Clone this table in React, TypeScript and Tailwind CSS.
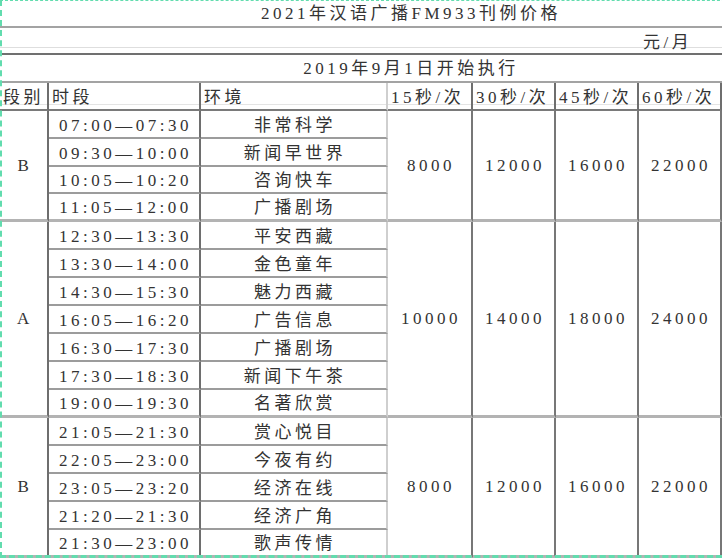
import React from 'react';

type Row = [string, string];

const groups: { band: string; prices: string[]; rows: Row[] }[] = [
  {
    band: 'B',
    prices: ['8000', '12000', '16000', '22000'],
    rows: [
      ['07:00—07:30', '非常科学'],
      ['09:30—10:00', '新闻早世界'],
      ['10:05—10:20', '咨询快车'],
      ['11:05—12:00', '广播剧场'],
    ],
  },
  {
    band: 'A',
    prices: ['10000', '14000', '18000', '24000'],
    rows: [
      ['12:30—13:30', '平安西藏'],
      ['13:30—14:00', '金色童年'],
      ['14:30—15:30', '魅力西藏'],
      ['16:05—16:20', '广告信息'],
      ['16:30—17:30', '广播剧场'],
      ['17:30—18:30', '新闻下午茶'],
      ['19:00—19:30', '名著欣赏'],
    ],
  },
  {
    band: 'B',
    prices: ['8000', '12000', '16000', '22000'],
    rows: [
      ['21:05—21:30', '赏心悦目'],
      ['22:05—23:00', '今夜有约'],
      ['23:05—23:20', '经济在线'],
      ['21:20—21:30', '经济广角'],
      ['21:30—23:00', '歌声传情'],
    ],
  },
];

const spans: Record<number, string> = {
  4: 'row-span-4',
  5: 'row-span-5',
  7: 'row-span-7',
};

export default function App() {
  return (
    <div className="relative w-[722px] h-[559px] overflow-hidden bg-white">
      <div className="grid w-[818px] grid-cols-[49px_152px_187px_85px_83px_83px_83px_96px] grid-rows-[28px_27px_28px_28px_28px_28px_27px_28px_repeat(12,28px)] font-['Liberation_Serif','Noto_Sans_CJK_SC',serif] text-[17px] tracking-[3.5px] text-[#333] leading-none">
        {/* title rows */}
        <div className="col-span-8 flex items-center justify-center border-b-2 border-[#a3a3a3] pl-1">
          2021年汉语广播FM933刊例价格
        </div>
        <div className="col-span-6 border-b-2 border-[#707070] bg-[linear-gradient(to_bottom,transparent_19px,#dedede_19px,#dedede_20px,transparent_20px)]" />
        <div className="flex items-center border-b-2 border-[#707070] bg-[linear-gradient(to_bottom,transparent_19px,#dedede_19px,#dedede_20px,transparent_20px)] pl-1 pt-1">
          元/月
        </div>
        <div className="border-b-2 border-[#707070] bg-[linear-gradient(to_bottom,transparent_19px,#dedede_19px,#dedede_20px,transparent_20px)]" />
        <div className="col-span-8 flex items-center justify-center border-b-2 border-[#a3a3a3] pl-1">
          2019年9月1日开始执行
        </div>

        {/* header */}
        {['段别', '时段', '环境', '15秒/次', '30秒/次', '45秒/次', '60秒/次', ''].map((h, i) => (
          <div
            key={i}
            className={`flex items-center overflow-hidden whitespace-nowrap border-b-2 border-b-[#7a7a7a] pl-[3px] pt-[2px] ${
              i === 7 ? '' : i === 2 ? 'border-r-2 border-r-[#cfcfcf]' : 'border-r-2 border-r-[#6e6e6e]'
            } bg-[linear-gradient(to_bottom,transparent_21px,#e4e4e4_21px,#e4e4e4_22px,transparent_22px)]`}
          >
            {h}
          </div>
        ))}

        {/* data */}
        {groups.map((g, gi) =>
          g.rows.map((r, ri) => {
            const last = ri === g.rows.length - 1;
            const rowBorder = last ? 'border-b-[3px] border-b-[#b3b3b3]' : 'border-b-2 border-b-[#9c9c9c]';
            const span = spans[g.rows.length];
            return (
              <React.Fragment key={`${gi}-${ri}`}>
                {ri === 0 && (
                  <div className={`${span} flex items-center justify-center border-r-2 border-r-[#6e6e6e] border-b-[3px] border-b-[#b3b3b3] pl-[3px]`}>
                    {g.band}
                  </div>
                )}
                <div className={`flex items-center justify-center whitespace-nowrap border-r-2 border-r-[#6e6e6e] pl-[3px] pt-[2px] ${rowBorder}`}>
                  {r[0]}
                </div>
                <div className={`flex items-center justify-center whitespace-nowrap border-r-2 border-r-[#cfcfcf] pl-[3px] pt-[2px] ${rowBorder}`}>
                  {r[1]}
                </div>
                {ri === 0 &&
                  g.prices.map((p, pi) => (
                    <div
                      key={pi}
                      className={`${span} flex items-center justify-center border-r-2 border-r-[#777] border-b-[3px] border-b-[#b3b3b3] pl-[3px]`}
                    >
                      {p}
                    </div>
                  ))}
                {ri === 0 && <div className={`${span} border-b-[3px] border-b-[#b3b3b3]`} />}
              </React.Fragment>
            );
          })
        )}
      </div>

      {/* copy selection marquee */}
      <div className="pointer-events-none absolute left-0 top-0 h-[558px] w-[740px] border-l-2 border-t border-b-[3px] border-dashed border-[#62dcae]" />
    </div>
  );
}
